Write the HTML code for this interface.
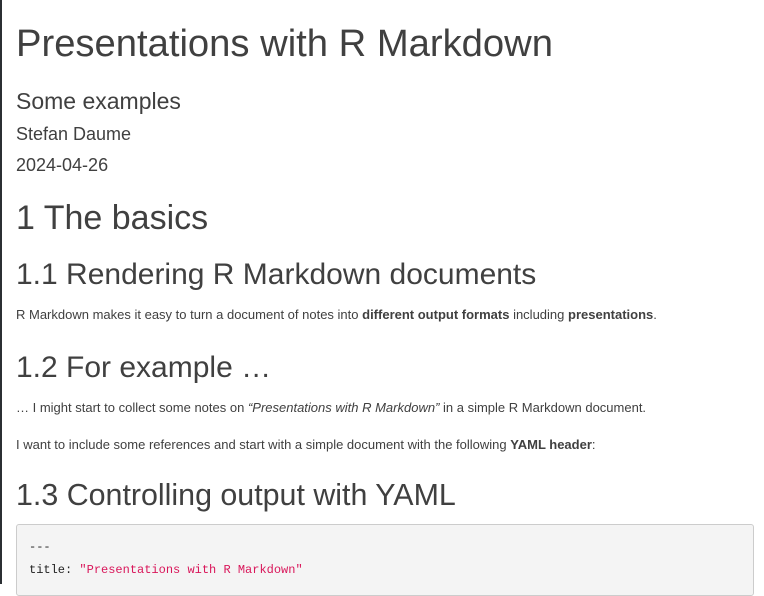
<!DOCTYPE html>
<html><head><meta charset="utf-8"><style>
body{margin:0;width:764px;height:584px;overflow:hidden;background:#fff;font-family:"Liberation Sans",sans-serif;color:#404040;position:relative}
.l{position:absolute;left:16px;white-space:nowrap;line-height:1}
.edge{position:absolute;left:0;top:0;width:2px;height:584px;background:#2b2f33}
.code{position:absolute;left:16px;top:524px;width:736px;height:70px;background:#f4f4f4;border:1px solid #ccc;border-radius:3px;font-family:"Liberation Mono",monospace;font-size:12px;color:#222}
.code div{position:absolute;left:12px;white-space:pre}
.s{color:#d9165a}
</style></head><body>
<div class="edge"></div>
<div class="l" style="top:25px;font-size:38.2px">Presentations with R Markdown</div>
<div class="l" style="top:90px;font-size:23px">Some examples</div>
<div class="l" style="top:125px;font-size:18px">Stefan Daume</div>
<div class="l" style="top:156px;font-size:18px">2024-04-26</div>
<div class="l" style="top:201px;font-size:34px">1 The basics</div>
<div class="l" style="top:260px;font-size:30px">1.1 Rendering R Markdown documents</div>
<div class="l" style="top:308px;font-size:13px">R Markdown makes it easy to turn a document of notes into <b>different output formats</b> including <b>presentations</b>.</div>
<div class="l" style="top:353px;font-size:30px">1.2 For example …</div>
<div class="l" style="top:401px;font-size:13px">… I might start to collect some notes on <i>“Presentations with R Markdown”</i> in a simple R Markdown document.</div>
<div class="l" style="top:438px;font-size:13px">I want to include some references and start with a simple document with the following <b>YAML header</b>:</div>
<div class="l" style="top:480px;font-size:30.4px">1.3 Controlling output with YAML</div>
<div class="code"><div style="top:15px">---</div><div style="top:38px">title: <span class="s">"Presentations with R Markdown"</span></div></div>
</body></html>
